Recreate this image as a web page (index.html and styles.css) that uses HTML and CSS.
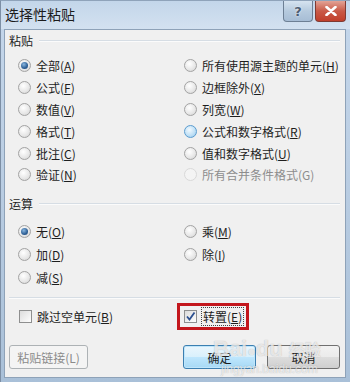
FILE: index.html
```html
<!DOCTYPE html>
<html lang="zh-CN">
<head>
  <meta charset="UTF-8" />
  <title>选择性粘贴</title>
  <link rel="stylesheet" href="styles.css">
</head>
<body>
  <div class="window">
    <div class="titlebar">
      <span class="title">选择性粘贴</span>
      <div class="caption-btns">
        <span class="cap help">?</span>
        <span class="cap close">
          <svg width="12" height="10" viewBox="0 0 12 10"><path d="M1.5 1 L10.5 9 M10.5 1 L1.5 9" stroke="#fff" stroke-width="2.6" stroke-linecap="round"/></svg>
        </span>
      </div>
    </div>

    <div class="body">
      <div class="group-head"><span>粘贴</span><i></i></div>
      <div class="grid paste">
        <label class="opt"><span class="radio on"></span>全部(<u>A</u>)</label>
        <label class="opt"><span class="radio"></span>所有使用源主题的单元(<u>H</u>)</label>
        <label class="opt"><span class="radio"></span>公式(<u>F</u>)</label>
        <label class="opt"><span class="radio"></span>边框除外(<u>X</u>)</label>
        <label class="opt"><span class="radio"></span>数值(<u>V</u>)</label>
        <label class="opt"><span class="radio"></span>列宽(<u>W</u>)</label>
        <label class="opt"><span class="radio"></span>格式(<u>T</u>)</label>
        <label class="opt"><span class="radio hover"></span>公式和数字格式(<u>R</u>)</label>
        <label class="opt"><span class="radio"></span>批注(<u>C</u>)</label>
        <label class="opt"><span class="radio"></span>值和数字格式(<u>U</u>)</label>
        <label class="opt"><span class="radio"></span>验证(<u>N</u>)</label>
        <label class="opt disabled"><span class="radio"></span>所有合并条件格式(G)</label>
      </div>

      <div class="group-head op-head"><span>运算</span><i></i></div>
      <div class="grid ops">
        <label class="opt"><span class="radio on"></span>无(<u>O</u>)</label>
        <label class="opt"><span class="radio"></span>乘(<u>M</u>)</label>
        <label class="opt"><span class="radio"></span>加(<u>D</u>)</label>
        <label class="opt"><span class="radio"></span>除(<u>I</u>)</label>
        <label class="opt"><span class="radio"></span>减(<u>S</u>)</label>
      </div>

      <div class="sep"></div>

      <div class="grid checks">
        <label class="opt"><span class="check"></span>跳过空单元(<u>B</u>)</label>
        <div class="mark">
          <label class="opt">
            <span class="check">
              <svg width="11" height="11" viewBox="0 0 11 11"><path d="M2 5.5 L4.5 8.5 L9.5 1.5" fill="none" stroke="#2b4f8f" stroke-width="1.8"/></svg>
            </span>
            <span class="focus">转置(<u>E</u>)</span>
          </label>
        </div>
      </div>

      <div class="buttons">
        <button class="btn" disabled>粘贴链接(L)</button>
        <span class="spacer"></span>
        <button class="btn default">确定</button>
        <button class="btn">取消</button>
      </div>

      <div class="watermark">
        <div class="wm-big">Bai<span class="paw">●</span>du <span class="wm-cn">经验</span></div>
        <div class="wm-small">jingyan.baidu.com</div>
      </div>
    </div>
  </div>
</body>
</html>
```

FILE: styles.css
```css
html, body {
  margin: 0;
  padding: 0;
}
body {
  width: 350px;
  height: 382px;
  overflow: hidden;
  font-family: "Noto Sans CJK SC", "DejaVu Sans", sans-serif;
  font-size: 12px;
  color: #1e1e1e;
}
.window {
  width: 350px;
  height: 382px;
  box-sizing: border-box;
  padding: 0 4px 4px 3px;
  display: flex;
  flex-direction: column;
  background: linear-gradient(#c5d7eb, #bccfe4 40%, #a9c0d8);
  border-left: 1px solid #7d8fa5;
  border-top: 1px solid #8fa3ba;
}
.titlebar {
  height: 28px;
  display: flex;
  justify-content: space-between;
  align-items: flex-start;
  background: linear-gradient(#c3d6ea, #d3e1f0);
  margin: 0 -4px 0 -3px;
  padding: 0 4px 0 4px;
}
.title {
  font-size: 14px;
  line-height: 26px;
  color: #1b1b1b;
}
.caption-btns {
  display: flex;
  gap: 2px;
}
.cap {
  height: 21px;
  border: 1px solid #6d7f94;
  border-top: none;
  border-radius: 0 0 4px 4px;
  display: flex;
  align-items: center;
  justify-content: center;
  box-sizing: border-box;
}
.help {
  width: 30px;
  background: linear-gradient(#d6e3f0, #b6cade 50%, #a7bdd5);
  font-family: "DejaVu Sans", sans-serif;
  font-weight: bold;
  font-size: 13px;
  color: #4d5d72;
  text-shadow: 0 0 2px #fff;
}
.close {
  width: 31px;
  background: linear-gradient(#e2a396, #c95a47 50%, #c13f2b);
  border-color: #7f3a32;
}
.body {
  flex: 1;
  position: relative;
  background: #f0f0f0;
  border: 1px solid #8ea2b8;
  padding: 3px 5px 8px 4px;
  display: flex;
  flex-direction: column;
}
.group-head {
  display: flex;
  align-items: center;
  height: 16px;
  line-height: 16px;
  gap: 6px;
}
.group-head i {
  flex: 1;
  height: 1px;
  background: #d6dde4;
  border-bottom: 1px solid #fbfbfb;
}
.op-head {
  margin-top: 10px;
}
.grid {
  display: grid;
  grid-template-columns: 166px 1fr;
  padding-left: 9px;
}
.paste {
  margin-top: 6px;
  grid-auto-rows: 21.8px;
}
.ops {
  margin-top: 8px;
  grid-auto-rows: 23px;
}
.opt {
  display: flex;
  align-items: center;
  white-space: nowrap;
}
.opt u {
  text-decoration: underline;
  text-underline-offset: 1px;
}
.disabled {
  color: #8d8d8d;
}
.radio {
  width: 11px;
  height: 11px;
  border-radius: 50%;
  border: 1px solid #a3a3a3;
  background: radial-gradient(circle at 40% 35%, #ffffff, #e6e6e6 60%, #cfcfcf);
  margin-right: 5px;
  flex: none;
  position: relative;
}
.radio.on::after {
  content: "";
  position: absolute;
  left: 2px;
  top: 2px;
  width: 7px;
  height: 7px;
  border-radius: 50%;
  background: radial-gradient(circle at 40% 35%, #8ab7e0, #2d5f95 60%, #1c4273);
}
.radio.hover {
  border-color: #5b9ccf;
  background: radial-gradient(circle at 40% 35%, #f2f9fe, #c1e1f6 55%, #94c6ea);
}
.disabled .radio {
  border-color: #d9d9d9;
  background: #f4f4f4;
}
.sep {
  margin-top: 8px;
  height: 1px;
  background: #d6dde4;
  border-bottom: 1px solid #fbfbfb;
}
.checks {
  margin-top: 4px;
  height: 22px;
  align-items: center;
  padding-left: 10px;
}
.check {
  width: 11px;
  height: 11px;
  border: 1px solid #8e8f8f;
  background: linear-gradient(135deg, #dcdcdc, #fdfdfd);
  margin-right: 5px;
  flex: none;
  display: flex;
  align-items: center;
  justify-content: center;
}
.mark {
  justify-self: start;
  margin-left: -8px;
  border: 3px solid #c3161c;
  padding: 2px 3px 2px 4px;
}
.focus {
  outline: 1px dotted #444;
  outline-offset: 0;
  padding: 0 1px;
}
.buttons {
  margin-top: auto;
  display: flex;
  align-items: center;
  gap: 11px;
}
.spacer {
  flex: 1;
}
.btn {
  height: 24px;
  font-family: inherit;
  font-size: 12px;
  color: #1e1e1e;
  border: 1px solid #707070;
  border-radius: 3px;
  background: linear-gradient(#f2f2f2, #ebebeb 50%, #dddddd 51%, #cfcfcf);
  width: 73px;
  padding: 0;
}
.btn[disabled] {
  width: 79px;
  color: #8b8b8b;
  border-color: #adb2b5;
  background: #f4f4f4;
}
.btn.default {
  border-color: #3c7fb1;
  box-shadow: inset 0 0 0 1px #bfe6fb;
  background: linear-gradient(#eaf6fd, #d9f0fc 50%, #bee6fd 51%, #a7d9f5);
}
.watermark {
  position: absolute;
  left: 208px;
  top: 307px;
  color: rgba(255, 255, 255, 0.7);
  text-shadow: 0 0 1px rgba(90, 90, 90, 0.45);
  pointer-events: none;
  font-family: "Liberation Sans", sans-serif;
}
.wm-big {
  font-size: 22px;
  font-weight: bold;
  line-height: 24px;
}
.wm-cn {
  font-family: "Noto Sans CJK SC", sans-serif;
  font-size: 16px;
}
.paw {
  font-size: 14px;
}
.wm-small {
  font-size: 12px;
  line-height: 12px;
  margin-left: 8px;
}
```
